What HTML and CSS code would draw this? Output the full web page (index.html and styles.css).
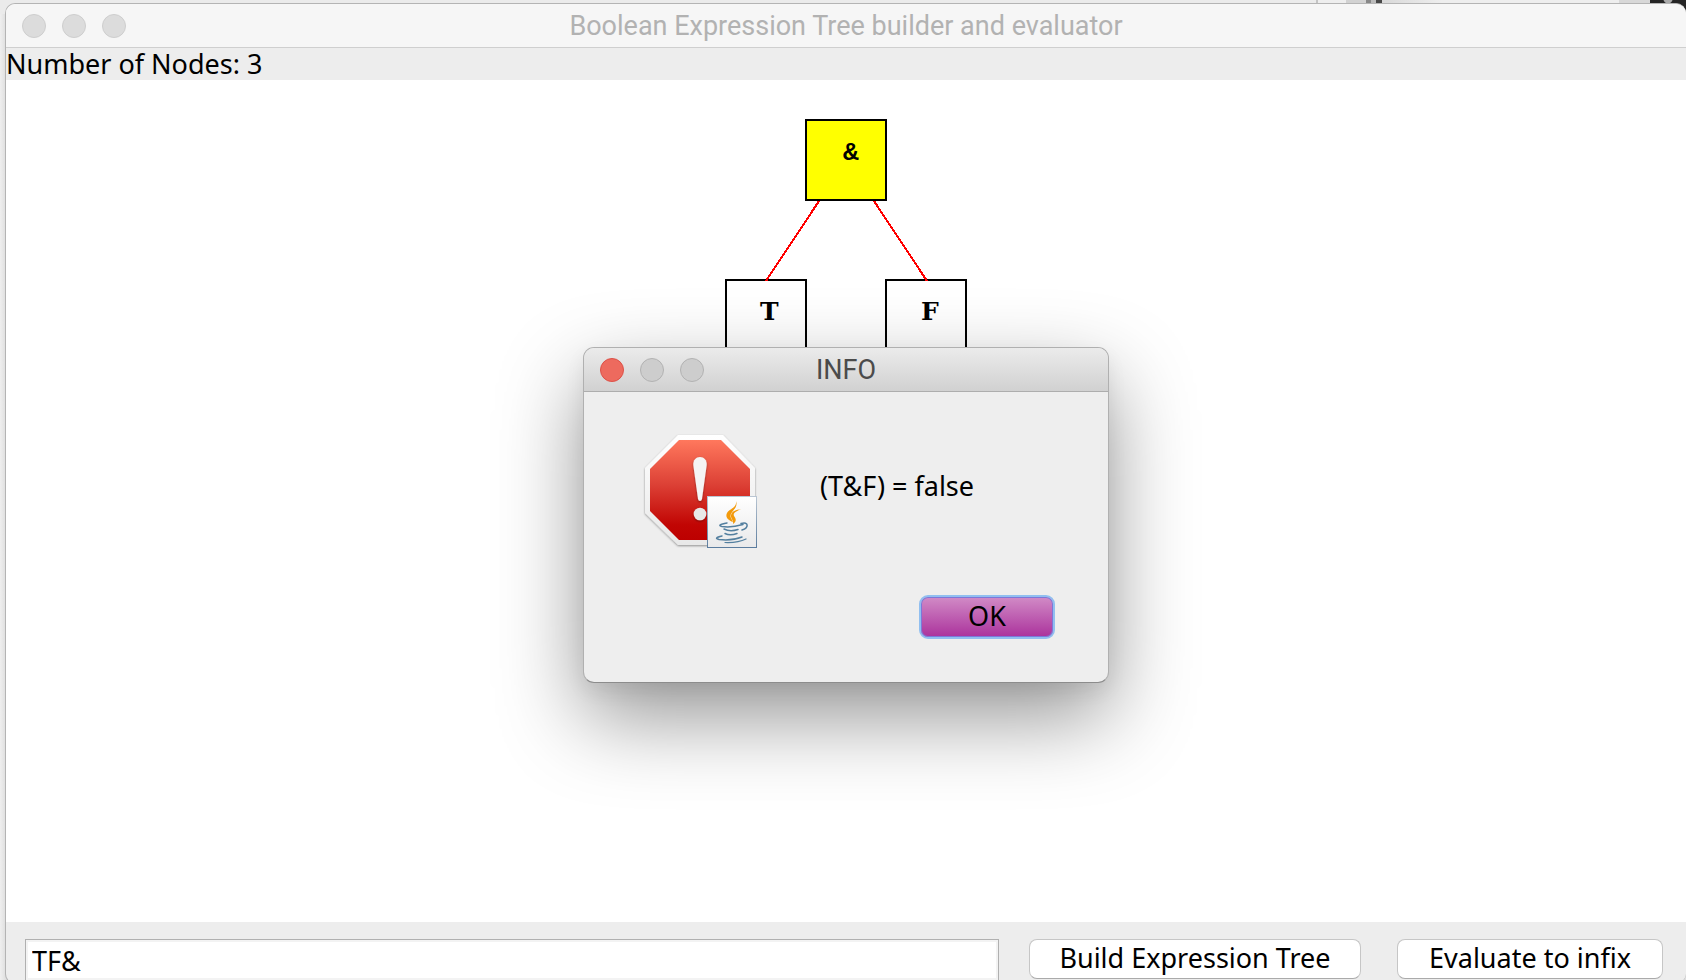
FILE: index.html
```html
<!DOCTYPE html>
<html lang="en">
<head>
<meta charset="utf-8">
<title>Boolean Expression Tree builder and evaluator</title>
<link rel="stylesheet" href="styles.css">
</head>
<body>
<div class="backdrop" aria-hidden="true">
  <span class="strip strip-line"></span>
  <span class="strip strip-soft"></span>
  <span class="strip strip-grey"></span>
  <span class="strip strip-dark"></span>
  <span class="strip strip-pale"></span>
  <span class="strip strip-mid"></span>
  <span class="strip strip-black"></span>
</div>
<main class="window">
  <header class="titlebar">
    <div class="lights"><span class="light"></span><span class="light"></span><span class="light"></span></div>
    <h1 class="title">Boolean Expression Tree builder and evaluator</h1>
  </header>
  <p class="status">Number of Nodes: 3</p>
  <section class="canvas">
    <svg class="tree" width="244" height="284" viewBox="0 0 244 284">
      <g class="node">
        <rect class="root" x="82" y="40" width="80" height="80"/>
        <rect x="2" y="200" width="80" height="80"/>
        <rect x="162" y="200" width="80" height="80"/>
      </g>
      <g class="edge">
        <path d="M95 121 42 201"/>
        <path d="M150 121 203 201"/>
      </g>
      <text class="operator" x="119" y="80">&amp;</text>
      <text class="operand" x="36" y="240">T</text>
      <text class="operand" x="197" y="240">F</text>
    </svg>
  </section>
  <form class="controls">
    <input class="expression" type="text" value="TF&amp;" aria-label="Postfix expression">
    <button class="push build" type="button">Build Expression Tree</button>
    <button class="push evaluate" type="button">Evaluate to infix</button>
  </form>
</main>
<div class="dialog" role="dialog" aria-labelledby="dialog-title">
  <header class="dialog-bar">
    <div class="lights"><button class="light close" type="button" aria-label="Close"></button><span class="light"></span><span class="light"></span></div>
    <h2 class="title" id="dialog-title">INFO</h2>
  </header>
  <div class="dialog-body">
    <div class="message">
      <svg class="alert" width="120" height="120" viewBox="0 0 120 120" aria-hidden="true">
        <defs>
          <linearGradient id="red" x1="0" y1="0" x2="0" y2="1"><stop offset="0" stop-color="#ff785d"/><stop offset=".45" stop-color="#dc4035"/><stop offset=".85" stop-color="#c10503"/><stop offset="1" stop-color="#bd0000"/></linearGradient>
          <linearGradient id="rim" x1="0" y1="0" x2="0" y2="1"><stop offset="0" stop-color="#fff"/><stop offset="1" stop-color="#e8e8e8"/></linearGradient>
          <linearGradient id="card" x1="0" y1="0" x2="0" y2="1"><stop offset="0" stop-color="#fff"/><stop offset="1" stop-color="#e9e9ea"/></linearGradient>
          <linearGradient id="frame" x1="0" y1="0" x2="0" y2="1"><stop offset="0" stop-color="#bac6d3"/><stop offset="1" stop-color="#5b7c9e"/></linearGradient>
          <filter id="drop" x="-10%" y="-10%" width="120%" height="120%"><feDropShadow dx="0" dy="1" stdDeviation="1" flood-opacity=".4"/></filter>
        </defs>
        <path filter="url(#drop)" fill="url(#rim)" d="M38 5H83L115 38V83L83 115H38L5 83V38Z"/>
        <path fill="url(#red)" d="M39 10H81L110 39V81L81 110H39L10 81V39Z"/>
        <g fill="#f5f5f5" filter="url(#drop)">
          <path d="M60 27C64 27 67 30 66.700 35L62 69Q61.500 71 60 71Q58.500 71 58 69L53.300 35C53 30 56 27 60 27Z"/>
          <circle cx="60" cy="84" r="6.300" fill="#e8e8e8"/>
        </g>
        <rect x="67.500" y="66.500" width="49" height="51" fill="url(#card)" stroke="url(#frame)"/>
        <g fill="#f39a0b">
          <path d="M96 71C99 79 88 82 91 88Q92 90 93 92C88 90 85 87 87 83C89 79 97 78 96 71Z"/>
          <path d="M101 79C95 82 93 83 94 86C96 89 97 91 93 94C94 90 90 88 91 85C92 81 96 80 101 79Z"/>
        </g>
        <g fill="none" stroke="#537f9f" stroke-width="1.500" stroke-linecap="round">
          <path d="M87 93Q76 95 82 96.500Q91 98 103 94.500"/>
          <path d="M101 93.500C109 91 109 98 102 100"/>
          <path d="M84 99Q90 102 98 99.500"/>
          <path d="M85 103.500Q90 106 97 103.500"/>
          <path d="M82 106Q73 108 79 109.500Q92 111 102 107"/>
          <path stroke-width="1.200" d="M85 112.500Q98 113 106 109"/>
        </g>
      </svg>
      <p class="message-text">(T&amp;F) = false</p>
    </div>
    <button class="ok" type="button">OK</button>
  </div>
</div>
</body>
</html>
```
FILE: styles.css
```css
* { box-sizing: border-box; }

body {
  position: relative;
  height: 100vh;
  margin: 0;
  padding: 3px 0 0 5px;
  overflow: hidden;
  background: linear-gradient(to right, #efefef, #dedede 6px);
  color: #000;
  font: 27px/32px "Noto Sans", "Open Sans", sans-serif;
}

h1, h2, p { margin: 0; font-weight: 400; }

.backdrop {
  position: absolute;
  inset: 0 0 auto 0;
  display: flex;
  justify-content: flex-end;
  height: 14px;
  background: #ebebeb;
}
.strip { flex: none; }
.strip-line { width: 2px; background: #c4c4c4; }
.strip-soft { width: 28px; background: #eee; }
.strip-grey { width: 20px; background: #d2d2d2; }
.strip-dark { width: 16px; background: linear-gradient(to right, #888 0 5px, #bbb 5px 10px, #484848 10px); }
.strip-pale { width: 237px; background: linear-gradient(to right, #d8d8d8, #eee 60px); }
.strip-mid { width: 31px; background: #d8d8d8; }
.strip-black {
  width: 36px;
  background: radial-gradient(circle at 18px -1px, #aaa 0 4px, transparent 5px), #252525;
}

.window {
  position: relative;
  display: flex;
  flex-direction: column;
  height: calc(100vh + 1px);
  overflow: hidden;
  border: 1px solid #b4b4b4;
  border-right: 0;
  border-radius: 10px;
  background: #ededed;
}

.titlebar, .dialog-bar {
  display: grid;
  grid-template-columns: 1fr auto 1fr;
  align-items: center;
  flex: none;
  height: 44px;
  padding: 0 16px;
}
.titlebar { border-bottom: 1px solid #cfcfcf; background: #f6f6f6; }
.title { padding-top: 1px; font: 27px/32px Roboto, sans-serif; }
.titlebar .title { color: #b2b2b2; }

.lights { display: flex; gap: 16px; }
.light {
  width: 24px;
  height: 24px;
  padding: 0;
  border: 1px solid #cecece;
  border-radius: 50%;
  background: #dcdcdc;
}

.status { flex: none; }

.canvas {
  display: flex;
  flex: 1;
  justify-content: center;
  min-height: 0;
  background: #fff;
}
.tree { flex: none; overflow: visible; }
.node { fill: #fff; stroke: #000; stroke-width: 2; }
.root { fill: #ff0; }
.edge { stroke: #f00; stroke-width: 2; shape-rendering: crispEdges; }
.operator { font: bold 26px "Liberation Mono", monospace; }
.operand { font: bold 25px "DejaVu Serif", serif; }

.controls {
  display: flex;
  flex: none;
  align-items: flex-start;
  height: 61px;
  padding: 17px 23px 0 19px;
}
.expression {
  flex: 1;
  min-width: 0;
  height: 42px;
  margin-right: 30px;
  padding: 0 6px;
  border: 1px solid #b0b0b0;
  outline: 2px solid #f3f3f3;
  outline-offset: -3px;
  background: #fff;
  color: #000;
  font: inherit;
}
.push {
  height: 40px;
  padding: 0 0 2px;
  border: 1px solid #c6c6c6;
  border-bottom-color: #aaa;
  border-radius: 8px;
  background: #fff;
  color: #000;
  font: inherit;
}
.build { width: 332px; margin-right: 36px; }
.evaluate { width: 266px; }

.dialog {
  position: absolute;
  top: 347px;
  left: calc(50% + 3px);
  width: 526px;
  transform: translateX(-50%);
  overflow: clip;
  border: 1px solid #b0b0b0;
  border-bottom-color: #8c8c8c;
  border-radius: 11px;
  background: #eee;
  box-shadow: 0 34px 84px rgba(0, 0, 0, .42), 0 8px 20px rgba(0, 0, 0, .06);
}
.dialog-bar { border-bottom: 1px solid #adadad; background: linear-gradient(#ebebeb, #d1d1d1); }
.dialog-bar .title { color: #4b4b4b; }
.dialog-bar .light { border-color: #b2b2b2; background: #cdcdcd; }
.dialog-bar .close { border-color: #dc5148; background: #ed6a5e; }

.dialog-body {
  display: flex;
  flex-direction: column;
  gap: 45px;
  padding: 38px 53px 43px 56px;
}
.message { display: flex; gap: 60px; }
.alert { flex: none; }
.message-text { padding-top: 40px; }

.ok {
  align-self: flex-end;
  width: 136px;
  height: 44px;
  padding: 0 0 3px;
  border: 2px solid #91bff0;
  border-radius: 9px;
  background: linear-gradient(#d18bc6, #ab329c);
  box-shadow: inset 0 0 0 1px #7d78d8;
  color: #000;
  font: inherit;
}
```
